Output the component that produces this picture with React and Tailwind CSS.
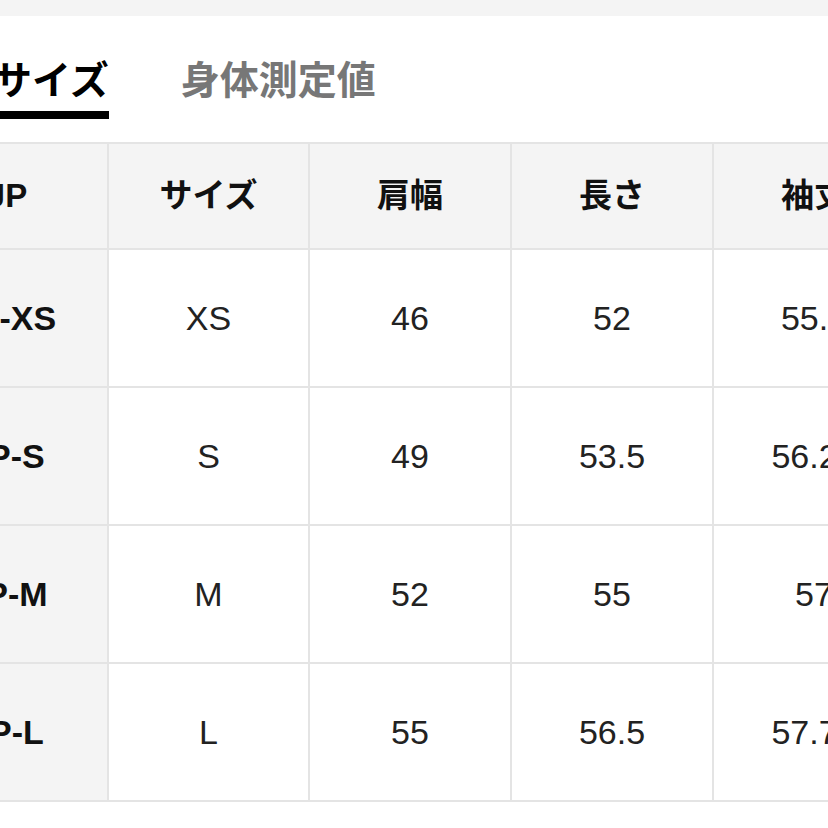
import React from 'react'

const rows = [
  { jp: 'JP-XS', size: 'XS', shoulder: '46', length: '52', sleeve: '55.5' },
  { jp: 'JP-S', size: 'S', shoulder: '49', length: '53.5', sleeve: '56.25' },
  { jp: 'JP-M', size: 'M', shoulder: '52', length: '55', sleeve: '57' },
  { jp: 'JP-L', size: 'L', shoulder: '55', length: '56.5', sleeve: '57.75' }
]

const headers = ['JP', 'サイズ', '肩幅', '長さ', '袖丈']

const font = { fontFamily: '"Liberation Sans", "Noto Sans CJK JP", sans-serif' }

function App() {
  return (
    <div className="w-[828px] h-[828px] overflow-hidden bg-white" style={font}>
      <div className="h-[16px] bg-[#f4f4f4]"></div>

      <div className="flex items-end h-[126px]">
        <div className="-ml-[7px] mb-[23px] border-b-[8px] border-black">
          <div className="text-[39px] leading-none font-bold text-black pb-[14px] whitespace-nowrap" style={{ fontFamily: '"Noto Sans CJK JP", sans-serif' }}>
            サイズ
          </div>
        </div>
        <div className="ml-[72px] mb-[31px]">
          <div className="text-[39px] leading-none font-bold text-[#777] pb-[14px] whitespace-nowrap" style={{ fontFamily: '"Noto Sans CJK JP", sans-serif' }}>
            身体測定値
          </div>
        </div>
      </div>

      <div className="-ml-[93px] w-[1100px] border-t-2 border-[#e4e4e4]">
        <div className="grid grid-cols-[202px_201px_202px_202px_202px]">
          {headers.map((h) => (
            <div
              key={h}
              className="h-[106px] flex items-center justify-center bg-[#f4f4f4] border-r-2 border-b-2 border-[#e4e4e4] text-[33px] font-bold text-[#111]"
            >
              {h}
            </div>
          ))}
          {rows.map((r) => (
            <React.Fragment key={r.jp}>
              <div className="h-[138px] flex items-center justify-center bg-[#f4f4f4] border-r-2 border-b-2 border-[#e4e4e4] text-[34px] font-bold text-[#111]">
                {r.jp}
              </div>
              {[r.size, r.shoulder, r.length, r.sleeve].map((v, i) => (
                <div
                  key={i}
                  className="h-[138px] flex items-center justify-center bg-white border-r-2 border-b-2 border-[#e4e4e4] text-[34px] text-[#222]"
                >
                  {v}
                </div>
              ))}
            </React.Fragment>
          ))}
        </div>
      </div>
    </div>
  )
}

export default App
